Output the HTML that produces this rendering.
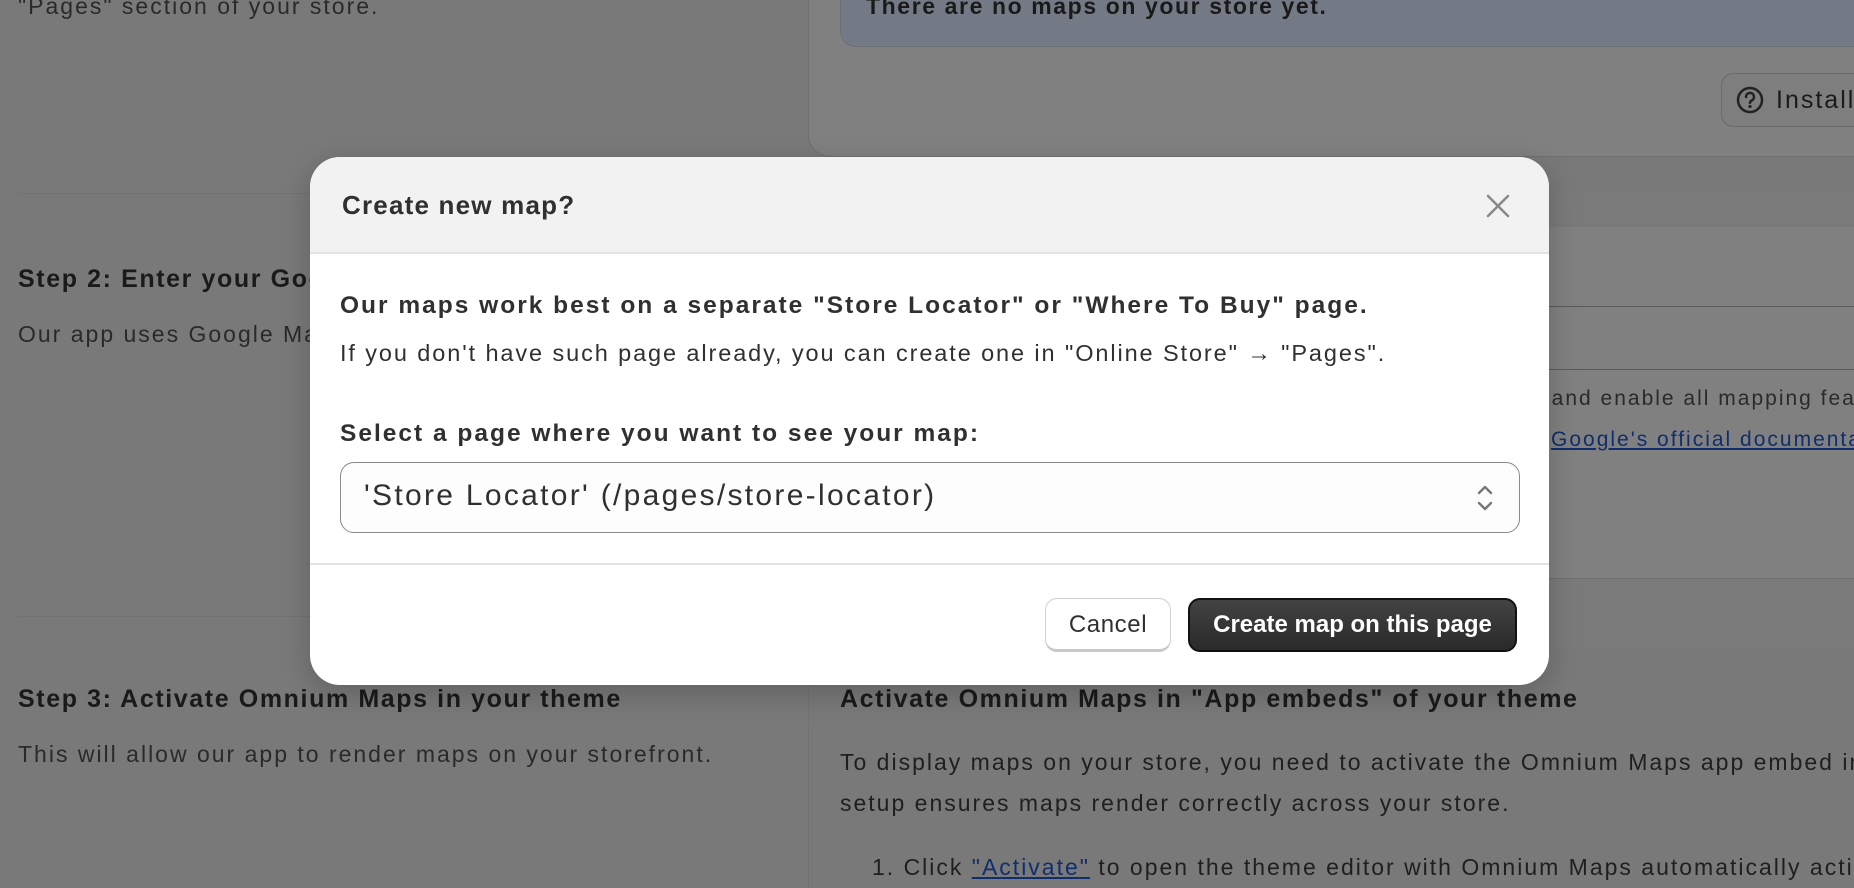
<!DOCTYPE html>
<html><head><meta charset="utf-8">
<style>
*{margin:0;padding:0;box-sizing:border-box}
body{width:1854px;height:884px;overflow:hidden;background:#797979;font-family:"Liberation Sans",sans-serif;position:relative;color:#1c1c1c}
.a{position:absolute;white-space:nowrap}
.r{letter-spacing:2px}
.b{letter-spacing:1.6px}
</style></head><body>
<!-- background page (dimmed) -->
<div class="a r" style="left:18px;top:-7px;font-size:23px;color:#2a2a2a">"Pages" section of your store.</div>
<div class="a" style="left:18px;top:193px;width:790px;height:1px;background:#727272"></div>
<div class="a b" style="left:18px;top:265px;font-size:25px;font-weight:bold;color:#1a1a1a">Step 2: Enter your Google</div>
<div class="a r" style="left:18px;top:321px;font-size:23px;color:#2a2a2a">Our app uses Google Maps</div>
<div class="a" style="left:18px;top:616px;width:790px;height:1px;background:#727272"></div>
<div class="a b" style="left:18px;top:685px;font-size:25px;font-weight:bold;color:#1a1a1a">Step 3: Activate Omnium Maps in your theme</div>
<div class="a r" style="left:18px;top:741px;font-size:23px;color:#2a2a2a">This will allow our app to render maps on your storefront.</div>

<div class="a" style="left:808px;top:-30px;width:1100px;height:187px;background:#808080;border:1px solid #6f6f6f;border-radius:0 0 0 22px"></div>
<div class="a" style="left:840px;top:-20px;width:1060px;height:67px;background:#747a85;border:1px solid #6a6f78;border-radius:0 0 0 16px"></div>
<div class="a b" style="left:866px;top:-7px;font-size:23px;font-weight:bold;color:#1a1a1a">There are no maps on your store yet.</div>
<div class="a" style="left:1721px;top:73px;width:200px;height:54px;border:1px solid #6a6a6a;border-radius:12px;background:#7e7e7e"></div>
<svg class="a" style="left:1735px;top:85px" width="30" height="30" viewBox="0 0 30 30"><circle cx="15" cy="15" r="12" fill="none" stroke="#222" stroke-width="2.5"/><path d="M11 12a4 4 0 1 1 5.5 3.6c-1 .5-1.5 1-1.5 2.2" fill="none" stroke="#222" stroke-width="2.5" stroke-linecap="round"/><circle cx="15" cy="21.5" r="1.6" fill="#222"/></svg>
<div class="a r" style="left:1776px;top:86px;font-size:25px;color:#1a1a1a">Installation</div>

<div class="a" style="left:808px;top:193px;width:1100px;height:34px;background:#7a7a7a"></div>
<div class="a" style="left:808px;top:227px;width:1100px;height:352px;background:#808080;border-bottom:1px solid #6f6f6f"></div>
<div class="a" style="left:1300px;top:306px;width:600px;height:1px;background:#5a5a5a"></div>
<div class="a" style="left:1300px;top:369px;width:600px;height:1px;background:#5a5a5a"></div>
<div class="a r" style="left:1536px;top:387px;font-size:21px;color:#2a2a2a">, and enable all mapping features</div>
<div class="a r" style="left:1551px;top:428px;font-size:21px;color:#0f2e6e;text-decoration:underline">Google's official documentation</div>
<div class="a" style="left:808px;top:579px;width:1100px;height:69px;background:#7a7a7a"></div>
<div class="a" style="left:808px;top:648px;width:1px;height:240px;background:#727272"></div>
<div class="a b" style="left:840px;top:685px;font-size:25px;font-weight:bold;color:#1a1a1a">Activate Omnium Maps in "App embeds" of your theme</div>
<div class="a r" style="left:840px;top:749px;font-size:23px;color:#1f1f1f">To display maps on your store, you need to activate the Omnium Maps app embed in your</div>
<div class="a r" style="left:840px;top:790px;font-size:23px;color:#1f1f1f">setup ensures maps render correctly across your store.</div>
<div class="a r" style="left:872px;top:854px;font-size:23px;color:#1f1f1f">1. Click <span style="color:#0f2e6e;text-decoration:underline">"Activate"</span> to open the theme editor with Omnium Maps automatically activated</div>

<!-- modal -->
<div class="a" style="left:310px;top:157px;width:1239px;height:528px;background:#fff;border-radius:30px;overflow:hidden;box-shadow:0 8px 30px rgba(0,0,0,.2)">
  <div style="position:absolute;left:0;top:0;width:100%;height:97px;background:#f2f2f2;border-bottom:2px solid #e3e3e3"></div>
  <div class="a" style="left:32px;top:33px;font-size:26px;font-weight:bold;color:#303030;letter-spacing:1.2px">Create new map?</div>
  <svg class="a" style="left:1175px;top:36px" width="26" height="26" viewBox="0 0 26 26"><path d="M3 3L23 23M23 3L3 23" stroke="#8a8a8a" stroke-width="2.6" stroke-linecap="round"/></svg>
  <div class="a" style="left:30px;top:135px;font-size:24.5px;font-weight:bold;color:#303030;letter-spacing:2px">Our maps work best on a separate "Store Locator" or "Where To Buy" page.</div>
  <div class="a" style="left:30px;top:183px;font-size:23.5px;color:#303030;letter-spacing:1.9px">If you don't have such page already, you can create one in "Online Store" → "Pages".</div>
  <div class="a" style="left:30px;top:263px;font-size:24.5px;font-weight:bold;color:#303030;letter-spacing:2px">Select a page where you want to see your map:</div>
  <div class="a" style="left:30px;top:305px;width:1180px;height:71px;border:1px solid #8a8a8a;border-radius:14px;background:#fdfdfd"></div>
  <div class="a" style="left:54px;top:322px;font-size:30px;color:#303030;letter-spacing:2.3px">'Store Locator' (/pages/store-locator)</div>
  <svg class="a" style="left:1164px;top:325px" width="22" height="32" viewBox="0 0 22 32"><path d="M5 11L11 5L17 11M5 21L11 27L17 21" fill="none" stroke="#777" stroke-width="2.4" stroke-linecap="round" stroke-linejoin="round"/></svg>
  <div class="a" style="left:0;top:406px;width:100%;height:2px;background:#e3e3e3"></div>
  <div class="a" style="left:735px;top:441px;width:126px;height:54px;border:1px solid #d0d0d0;border-bottom:3px solid #c8c8c8;border-radius:12px;background:#fff;font-size:24px;color:#303030;text-align:center;line-height:52px;letter-spacing:0.6px">Cancel</div>
  <div class="a" style="left:878px;top:441px;width:329px;height:54px;border-radius:12px;background:linear-gradient(#434343,#2a2a2a);border:2px solid #111;font-size:24px;color:#fff;text-align:center;line-height:50px;font-weight:bold">Create map on this page</div>
</div>
</body></html>
